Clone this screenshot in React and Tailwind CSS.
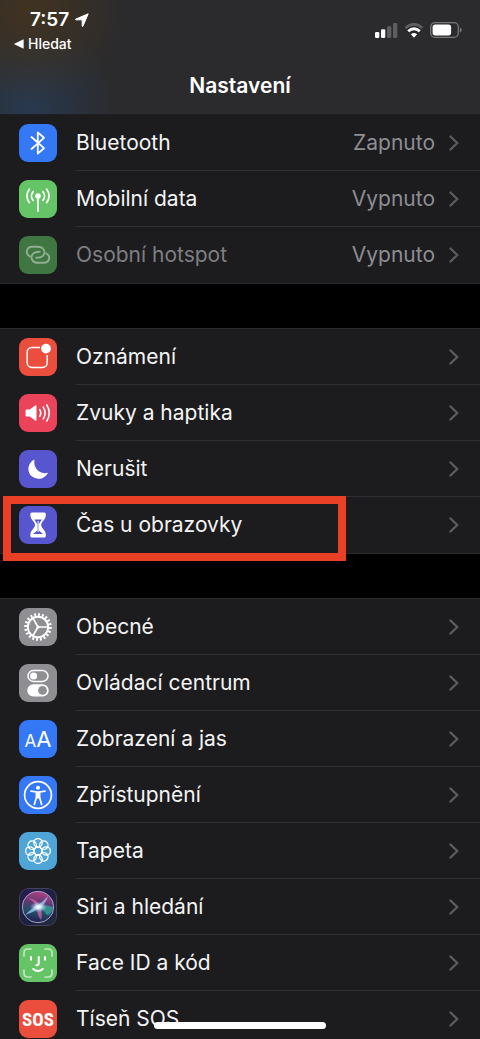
import React from "react";

const petals = [0, 45, 90, 135, 180, 225, 270, 315];

function Glyph({ children }) {
  return (
    <svg viewBox="0 0 38 38" className="w-full h-full" fill="none" aria-hidden="true">
      {children}
    </svg>
  );
}

const BluetoothIcon = () => (
  <Glyph>
    <path d="M12.5 13 25 24.2 18.8 29.6V8.4L25 13.8 12.5 25" stroke="white" strokeWidth="1.8" strokeLinejoin="round" strokeLinecap="round" />
  </Glyph>
);

const CellularIcon = () => (
  <Glyph>
    <circle cx="19" cy="16" r="2.8" fill="white" />
    <path d="M19 16v15" stroke="white" strokeWidth="1.8" strokeLinecap="round" />
    <path d="M14.2 11.6a6.6 6.6 0 0 0 0 8.8M23.8 11.6a6.6 6.6 0 0 1 0 8.8M10.3 9.3a10.6 10.6 0 0 0 0 13.2M27.7 9.3a10.6 10.6 0 0 1 0 13.2" stroke="white" strokeWidth="1.8" strokeLinecap="round" />
  </Glyph>
);

const HotspotIcon = () => (
  <Glyph>
    <g stroke="#8fae90" strokeWidth="1.9" strokeLinecap="round">
      <path d="M10.8 20.4C5.6 17.4 7.6 10.800 13.4 10.800H19c6 0 8.300 5.800 4.800 9.200-2 1.900-4.600 1.800-6.600 1.800" />
      <path d="M10.8 20.4C5.6 17.4 7.6 10.800 13.4 10.800H19c6 0 8.300 5.800 4.800 9.200-2 1.900-4.600 1.800-6.600 1.800" transform="rotate(180 19 18.800)" />
    </g>
  </Glyph>
);

const NotificationsIcon = () => (
  <Glyph>
    <path d="M21 9.4h-8.2a4.6 4.6 0 0 0-4.6 4.6v10.8a4.6 4.6 0 0 0 4.6 4.6h10.8a4.6 4.6 0 0 0 4.6-4.6V17" stroke="white" strokeWidth="1.5" />
    <circle cx="27" cy="10.6" r="4.9" fill="white" />
  </Glyph>
);

const SoundsIcon = () => (
  <Glyph>
    <path d="M7.6 15.6h3.2l5.4-4.2q1.3-.8 1.3.8v13.6q0 1.6-1.3.8l-5.4-4.2H7.6q-1 0-1-1v-4.8q0-1 1-1z" fill="white" />
    <path d="M20.8 15.7q2 3.3 0 6.6M24.3 13.2q3.6 5.8 0 11.6M27.8 11q5 8 0 16" stroke="white" strokeWidth="1.6" strokeLinecap="round" />
  </Glyph>
);

const MoonIcon = () => (
  <Glyph>
    <path d="M15.4 9.6C14 18 20.5 25 29 22.7 26.5 27.3 22.8 29 19.2 28.7 8.2 28.3 5.9 14.4 15.4 9.6z" fill="white" />
  </Glyph>
);

const HourglassIcon = () => (
  <Glyph>
    <path d="M12.8 6.6h12.6q1.4 0 1.4 1.5v1.2c0 4.6-4.6 6.3-4.6 9.7s4.6 5.1 4.6 9.7v1.2q0 1.5-1.4 1.5H12.800q-1.400 0-1.400-1.500v-1.200c0-4.600 4.600-6.300 4.600-9.700s-4.600-5.100-4.600-9.700V8.100q0-1.500 1.400-1.500z" fill="white" />
    <path d="M15.300 13.500h7.600l-3.100 4.700v6.300l4.300 3.600H14l4.400-3.600v-6.300z" fill="#5856ce" />
    <path d="M19.100 15v11" stroke="white" strokeWidth="1" />
  </Glyph>
);

const GearIcon = () => (
  <Glyph>
    <circle cx="19" cy="19" r="12.4" stroke="white" strokeWidth="2.8" pathLength="60" strokeDasharray="1.500 1.500" />
    <circle cx="19" cy="19" r="10.2" stroke="white" strokeWidth="1.9" />
    <path d="M19 19h10M19 19l-5-8.700M19 19l-5 8.700" stroke="white" strokeWidth="1.7" />
    <circle cx="19" cy="19" r="1.5" fill="white" />
  </Glyph>
);

const ControlCenterIcon = () => (
  <Glyph>
    <rect x="9" y="6.6" width="20" height="10.8" rx="5.4" stroke="white" strokeWidth="1.5" />
    <circle cx="14.6" cy="12" r="3.5" fill="white" />
    <rect x="8.3" y="20.3" width="21.4" height="12.2" rx="6.1" fill="white" />
    <circle cx="23.5" cy="26.4" r="4.4" fill="#8e8e93" />
  </Glyph>
);

const AccessibilityIcon = () => (
  <Glyph>
    <circle cx="19" cy="19" r="13.4" stroke="white" strokeWidth="1.7" />
    <circle cx="19" cy="11.7" r="2" fill="white" />
    <path d="M12 15.2 17.4 16v5.200l-2 7.200M26 15.200 20.600 16v5.200l2 7.200" stroke="white" strokeWidth="1.7" strokeLinecap="round" strokeLinejoin="round" />
    <path d="M17.200 15.200h3.600v7.200h-3.600z" fill="white" />
  </Glyph>
);

const WallpaperIcon = () => (
  <Glyph>
    <circle cx="19" cy="19" r="4" stroke="white" strokeWidth="1.3" />
    {petals.map((angle) => (
      <circle key={angle} cx="19" cy="10.8" r="4.2" stroke="white" strokeWidth="1.3" transform={`rotate(${angle} 19 19)`} />
    ))}
  </Glyph>
);

const SiriIcon = () => (
  <Glyph>
    <defs>
      <linearGradient id="siri-base" x1="0" y1="0" x2="1" y2="1">
        <stop offset="0" stopColor="#281c50" />
        <stop offset="0.55" stopColor="#1c2242" />
        <stop offset="1" stopColor="#252a3c" />
      </linearGradient>
      <linearGradient id="siri-orb" x1="0.6" y1="0" x2="0.4" y2="1">
        <stop offset="0" stopColor="#b53f86" />
        <stop offset="0.4" stopColor="#5b3a70" />
        <stop offset="0.65" stopColor="#24506c" />
        <stop offset="1" stopColor="#231c4e" />
      </linearGradient>
      <radialGradient id="siri-glow">
        <stop offset="0" stopColor="white" />
        <stop offset="0.35" stopColor="#e4f6ff" stopOpacity="0.8" />
        <stop offset="1" stopColor="#69b5dc" stopOpacity="0" />
      </radialGradient>
    </defs>
    <rect x="0.5" y="0.5" width="37" height="37" rx="8.5" fill="url(#siri-base)" stroke="#44425c" />
    <circle cx="19" cy="19" r="15.7" fill="url(#siri-orb)" stroke="#a6a0c4" strokeWidth="1" />
    <path d="M19 18q8-2 15 1-1 7-6 8-4-6-9-9z" fill="#2fae9c" opacity="0.7" />
    <path d="M9 10q9 1 12 8 3 7 1 14-4-5-4-12-2-6-9-10z" fill="#e66bb4" opacity="0.65" />
    <path d="M6 27Q13 20 19 17q6-4 10-9-2 7-7 11-7 5-16 8z" fill="#a8dcff" opacity="0.7" />
    <ellipse cx="19.5" cy="19" rx="9" ry="5.5" fill="url(#siri-glow)" />
  </Glyph>
);

const FaceIdIcon = () => (
  <Glyph>
    <path d="M5 12V9q0-4 4-4h3M26 5h3q4 0 4 4v3M33 26v3q0 4-4 4h-3M12 33H9q-4 0-4-4v-3" stroke="#c1e8c0" strokeWidth="1.7" strokeLinecap="round" />
    <path d="M12 13v2.800M26 13v2.800M19.700 13v6.200q0 2-2 2h-.4M14.200 25q4.800 4 9.600 0" stroke="white" strokeWidth="2" strokeLinecap="round" />
  </Glyph>
);

const DisplayIcon = () => (
  <span className="text-white leading-none">
    <span className="text-[17px]">A</span>
    <span className="text-[22px]">A</span>
  </span>
);

const SosIcon = () => (
  <span className="font-['Liberation_Sans_Narrow','Roboto_Condensed',Roboto,sans-serif] text-[19px] font-bold text-white leading-none">SOS</span>
);

const groups = [
  [
    { id: "bluetooth", label: "Bluetooth", value: "Zapnuto", color: "bg-[#3478f6]", icon: <BluetoothIcon /> },
    { id: "data", label: "Mobilní data", value: "Vypnuto", color: "bg-[#65c466]", icon: <CellularIcon /> },
    { id: "hotspot", label: "Osobní hotspot", value: "Vypnuto", color: "bg-[#3f7641]", icon: <HotspotIcon />, disabled: true },
  ],
  [
    { id: "oznameni", label: "Oznámení", color: "bg-[#eb4e3d]", icon: <NotificationsIcon /> },
    { id: "zvuky", label: "Zvuky a haptika", color: "bg-[#eb445a]", icon: <SoundsIcon /> },
    { id: "nerusit", label: "Nerušit", color: "bg-[#5856ce]", icon: <MoonIcon /> },
    { id: "cas", label: "Čas u obrazovky", color: "bg-[#5856ce]", icon: <HourglassIcon />, highlighted: true },
  ],
  [
    { id: "obecne", label: "Obecné", color: "bg-[#8e8e93]", icon: <GearIcon /> },
    { id: "centrum", label: "Ovládací centrum", color: "bg-[#8e8e93]", icon: <ControlCenterIcon /> },
    { id: "zobrazeni", label: "Zobrazení a jas", color: "bg-[#3478f6]", icon: <DisplayIcon /> },
    { id: "zpristupneni", label: "Zpřístupnění", color: "bg-[#3478f6]", icon: <AccessibilityIcon /> },
    { id: "tapeta", label: "Tapeta", color: "bg-[#50a5d8]", icon: <WallpaperIcon /> },
    { id: "siri", label: "Siri a hledání", color: "bg-[#211f45]", icon: <SiriIcon /> },
    { id: "faceid", label: "Face ID a kód", color: "bg-[#65c466]", icon: <FaceIdIcon /> },
    { id: "sos", label: "Tíseň SOS", color: "bg-[#eb4e3d]", icon: <SosIcon /> },
  ],
];

function SettingsRow({ item }) {
  return (
    <li className="relative group">
      <a href={`#${item.id}`} className="flex items-center gap-[19px] pl-[19px] h-14">
        <span className={`w-[38px] h-[38px] shrink-0 rounded-[9px] overflow-hidden flex items-center justify-center ${item.color}`}>
          {item.icon}
        </span>
        <span className="flex flex-1 items-center self-stretch pr-[21px] border-b border-[#303033] group-last:border-transparent">
          <span className={`flex-1 ${item.disabled ? "text-[#7f7f83]" : "text-[#f4f4f5]"}`}>{item.label}</span>
          {item.value && <span className="text-[#8e8e93] mr-3.5">{item.value}</span>}
          <svg viewBox="0 0 10 16" className="w-2.5 h-4" fill="none" aria-hidden="true">
            <path d="M1.5 1.5 8.3 8l-6.8 6.5" stroke="#5d5d61" strokeWidth="2.3" strokeLinecap="round" strokeLinejoin="round" />
          </svg>
        </span>
      </a>
      {item.highlighted && (
        <div className="absolute -top-px -bottom-2 left-[3px] w-[343px] border-8 border-[#ea4025] pointer-events-none" />
      )}
    </li>
  );
}

function Header() {
  return (
    <header className="shrink-0 bg-[#2b2b2d] bg-[radial-gradient(circle_at_30px_10px,#413321_0,transparent_95px),radial-gradient(circle_at_30px_105px,#28394f_0,transparent_85px)] border-b border-[#202023] text-white">
      <div className="flex justify-between pl-3.5 pr-[18px] pt-2.5">
        <div>
          <div className="flex items-center gap-1.5 pl-4 h-5">
            <time className="text-[19px] font-semibold">7:57</time>
            <svg viewBox="0 0 14 14" className="w-3.5 h-3.5" aria-hidden="true">
              <path d="M13.2.8 7.9 13.200q-.5.800-.7-.2V6.800H1Q0 6.600.8 6.100z" fill="white" stroke="white" strokeWidth="1" strokeLinejoin="round" />
            </svg>
          </div>
          <button type="button" className="flex items-center gap-1 h-7 text-sm font-medium">
            <svg viewBox="0 0 10 10" className="w-2.5 h-2.5" aria-hidden="true">
              <path d="M9.3.7v8.600L.5 5z" fill="white" stroke="white" strokeWidth=".6" strokeLinejoin="round" />
            </svg>
            Hledat
          </button>
        </div>
        <div className="flex items-center gap-1.5 h-10">
          <svg viewBox="0 0 23 15" className="w-[23px] h-[15px]" aria-hidden="true">
            <rect x="0" y="9" width="4.3" height="6" rx="1.2" fill="white" />
            <rect x="6" y="6.3" width="4.3" height="8.7" rx="1.2" fill="white" />
            <rect x="12" y="3.3" width="4.3" height="11.7" rx="1.2" fill="#5e5e60" />
            <rect x="18" y="0" width="4.3" height="15" rx="1.2" fill="#5e5e60" />
          </svg>
          <svg viewBox="0 0 20 15" className="w-5 h-[15px]" fill="none" aria-hidden="true">
            <path d="M1.5 5Q10-2.400 18.500 5" stroke="#5e5e60" strokeWidth="2.8" />
            <path d="M4.200 8.300q5.800-5 11.600 0" stroke="white" strokeWidth="2.8" />
            <path d="M6.900 11.300q3.100-2.500 6.200 0L10 14.700z" fill="white" />
          </svg>
          <svg viewBox="0 0 32 16" className="w-8 h-4" fill="none" aria-hidden="true">
            <rect x=".7" y=".7" width="27.6" height="14.6" rx="4.3" stroke="#777779" strokeWidth="1.3" />
            <rect x="2.6" y="2.6" width="18.5" height="10.8" rx="2.6" fill="white" />
            <path d="M29.8 5.500q2 .8 2 2.500t-2 2.500z" fill="#777779" />
          </svg>
        </div>
      </div>
      <h1 className="text-[21px] font-semibold text-center leading-7 py-3.5">Nastavení</h1>
    </header>
  );
}

function App() {
  return (
    <div className="relative h-screen flex flex-col bg-black overflow-hidden font-[Inter,sans-serif] text-[21px] leading-7">
      <Header />
      <main className="flex-1 min-h-0 overflow-y-auto [scrollbar-width:none] flex flex-col gap-11">
        {groups.map((items, index) => (
          <ul key={index} className="shrink-0 bg-[#1c1c1e] border-y border-[#2b2b2d] first:border-t-0">
            {items.map((item) => (
              <SettingsRow key={item.id} item={item} />
            ))}
          </ul>
        ))}
      </main>
      <div className="absolute bottom-2.5 inset-x-0 mx-auto w-[172px] h-[7px] rounded-full bg-white" />
    </div>
  );
}

export default App;
